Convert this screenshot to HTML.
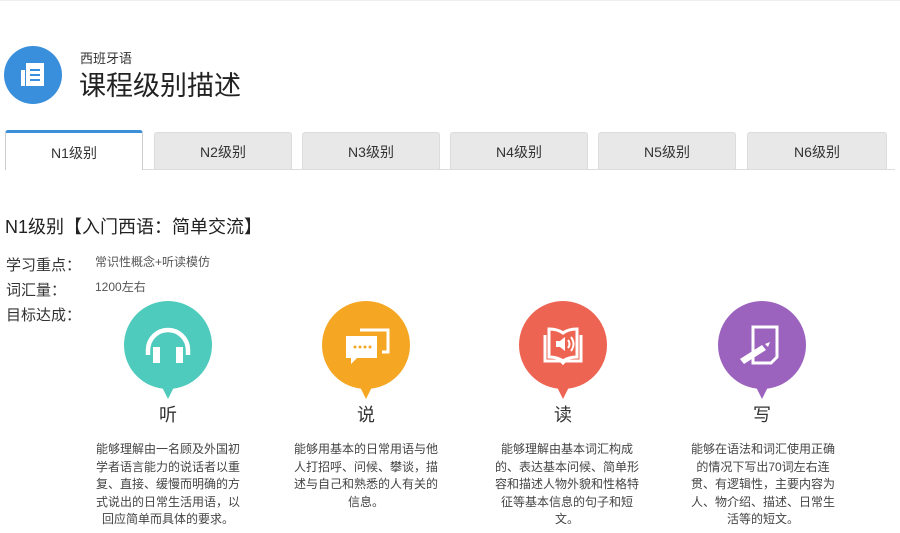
<!DOCTYPE html>
<html><head><meta charset="utf-8"><style>
*{margin:0;padding:0;box-sizing:border-box}
body{width:900px;height:533px;background:#fff;font-family:"Liberation Sans","Noto Sans CJK SC",sans-serif;color:#333;position:relative;overflow:hidden}
.a{position:absolute}
.tab{position:absolute;top:132px;height:37px;width:138px;background:#e8e8e8;border:1px solid #dcdcdc;border-bottom:none;border-radius:3px 3px 0 0;text-align:center;line-height:38px;font-size:14px;color:#333}
.tab.on{background:#fff;border-color:#ccc;border-top:3px solid #3c8fd9;top:130px;height:40px;line-height:40px}
.c{position:absolute;width:88px;height:88px;border-radius:50%;top:301px}
.c:after{content:"";position:absolute;left:34px;top:78px;border-left:10px solid transparent;border-right:10px solid transparent;border-top:20px solid;border-top-color:inherit}
.lab{position:absolute;top:401px;width:60px;text-align:center;font-size:18px;color:#333}
.d{position:absolute;top:441px;width:150px;text-align:center;font-size:12px;line-height:17.5px;color:#444}
.k{position:absolute;left:6px;font-size:15px;color:#333}
</style></head><body>
<div class="a" style="left:0;top:0;width:900px;height:1px;background:#eee"></div>
<svg class="a" style="left:4px;top:46px" width="58" height="58"><circle cx="29" cy="29" r="29" fill="#3a8fdc"/>
<rect x="22" y="17" width="18" height="23" fill="#fff"/><rect x="17" y="24" width="4" height="16" fill="#fff"/>
<rect x="26" y="23" width="10" height="2" fill="#3a8fdc"/><rect x="26" y="28" width="10" height="2" fill="#3a8fdc"/><rect x="26" y="33" width="10" height="2" fill="#3a8fdc"/></svg>
<div class="a" style="left:80px;top:48px;font-size:13px">西班牙语</div>
<div class="a" style="left:79px;top:64px;font-size:27px;color:#222">课程级别描述</div>
<div class="a" style="left:5px;top:169px;width:890px;height:1px;background:#ddd"></div>
<div class="tab on" style="left:5px">N1级别</div>
<div class="tab" style="left:154px">N2级别</div>
<div class="tab" style="left:302px">N3级别</div>
<div class="tab" style="left:450px">N4级别</div>
<div class="tab" style="left:598px">N5级别</div>
<div class="tab" style="left:747px;width:140px">N6级别</div>
<div class="a" style="left:5px;top:213px;font-size:18px;color:#222">N1级别【入门西语：简单交流】</div>
<div class="k" style="top:254px">学习重点：</div>
<div class="k" style="top:279px">词汇量：</div>
<div class="k" style="top:304px">目标达成：</div>
<div class="a" style="left:95px;top:253px;font-size:12px;color:#555">常识性概念+听读模仿</div>
<div class="a" style="left:95px;top:278px;font-size:12px;color:#555">1200左右</div>

<div class="c" style="left:124px;background:#4ecbbd;border-color:#4ecbbd"></div>
<svg class="a" style="left:124px;top:301px" width="88" height="88"><path d="M24 54V49a20 20 0 0 1 40 0v5" fill="none" stroke="#fff" stroke-width="4.5"/><rect x="29" y="46" width="7" height="16" fill="#fff"/><rect x="52" y="46" width="7" height="16" fill="#fff"/></svg>
<div class="c" style="left:322px;background:#f5a623;border-color:#f5a623"></div>
<svg class="a" style="left:322px;top:301px" width="88" height="88"><path d="M38 29h28v22h-6" fill="none" stroke="#fff" stroke-width="3"/><path d="M24 35h31v22H35l-6 6v-6h-5z" fill="#fff"/><g fill="#f5a623"><circle cx="33" cy="46" r="1.5"/><circle cx="38" cy="46" r="1.5"/><circle cx="43" cy="46" r="1.5"/><circle cx="48" cy="46" r="1.5"/></g></svg>
<div class="c" style="left:519px;background:#ee6452;border-color:#ee6452"></div>
<svg class="a" style="left:519px;top:301px" width="88" height="88"><path d="M26 34v26h16l2 2 2-2h16V34" fill="none" stroke="#fff" stroke-width="3"/><path d="M30 28v28c5 0 10 1 14 4 4-3 9-4 14-4V28c-5 0-10 1-14 4-4-3-9-4-14-4z" fill="none" stroke="#fff" stroke-width="3"/><path d="M37 40h4l5-4v14l-5-4h-4z" fill="#fff"/><path d="M49 39q3 4 0 8M52 36q5 7 0 14" fill="none" stroke="#fff" stroke-width="2"/></svg>
<div class="c" style="left:718px;background:#9b63bd;border-color:#9b63bd"></div>
<svg class="a" style="left:718px;top:301px" width="88" height="88"><path d="M35 26h24v30l-6 6H35z" fill="none" stroke="#fff" stroke-width="3"/><path d="M22 58l22-14 4 5-22 14z" fill="#fff"/><path d="M47 43l5-2-2 5z" fill="#fff"/></svg>

<div class="lab" style="left:138px">听</div>
<div class="lab" style="left:336px">说</div>
<div class="lab" style="left:533px">读</div>
<div class="lab" style="left:732px">写</div>
<div class="d" style="left:93px">能够理解由一名顾及外国初学者语言能力的说话者以重复、直接、缓慢而明确的方式说出的日常生活用语，以回应简单而具体的要求。</div>
<div class="d" style="left:291px">能够用基本的日常用语与他人打招呼、问候、攀谈，描述与自己和熟悉的人有关的信息。</div>
<div class="d" style="left:492px">能够理解由基本词汇构成的、表达基本问候、简单形容和描述人物外貌和性格特征等基本信息的句子和短文。</div>
<div class="d" style="left:688px">能够在语法和词汇使用正确的情况下写出70词左右连贯、有逻辑性，主要内容为人、物介绍、描述、日常生活等的短文。</div>
</body></html>
